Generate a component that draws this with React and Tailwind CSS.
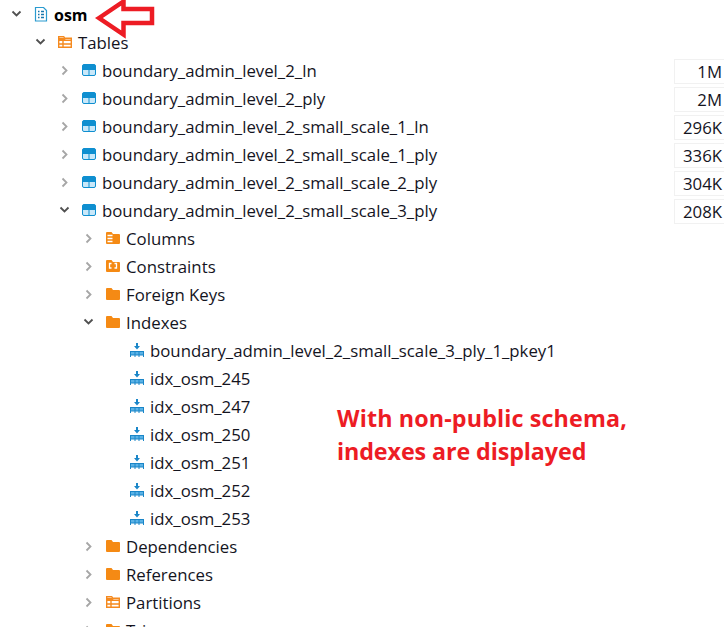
import React from "react";

const pad = ["pl-[8px]", "pl-[32px]", "pl-[56px]", "pl-[80px]", "pl-[104px]"];

const Chevron = ({ open }) => (
  <svg width="16" height="16" viewBox="0 0 16 16" fill="none" className="shrink-0">
    {open ? (
      <path d="M4.500 4.500l4 4 4-4" stroke="#505050" strokeWidth="1.800" />
    ) : (
      <path d="M6.500 3.500l4 4-4 4" stroke="#a6a6a6" strokeWidth="1.800" />
    )}
  </svg>
);

const DbIcon = () => (
  <svg width="16" height="16" viewBox="0 0 16 16" fill="none">
    <path d="M2.500.5h8l3 3v10.500h-11z" stroke="#2a9bd0" strokeWidth="1.200" fill="#fff" />
    <path d="M5 4.500h1.500M8 4.500h3M5 7.500h1.500M8 7.500h3M5 10.500h1.500M8 10.500h3" stroke="#1877ad" strokeWidth="1.500" />
  </svg>
);

const FolderTable = () => (
  <svg width="16" height="16" viewBox="0 0 16 16" fill="none">
    <path d="M1.700 12.300V1.700h5l1 1.500h6.600v9.100z" fill="#fff" stroke="#f58a1f" strokeWidth="1.400" />
    <path d="M2 3h5.500l1 1.500H14V6H2z" fill="#f58a1f" />
    <path d="M6 6v6M2 9h12" stroke="#f58a1f" strokeWidth="1.400" />
  </svg>
);

const TableIcon = () => (
  <svg width="16" height="16" viewBox="0 0 16 16" fill="none">
    <rect x="1.500" y="1.500" width="13" height="11" rx="1.500" fill="#c9e8f9" stroke="#0f8fd0" />
    <path d="M1.500 3a1.500 1.500 0 011.500-1.500h10A1.500 1.500 0 0114.500 3v3h-13z" fill="#0f8fd0" />
    <path d="M8 6v6.500M1.500 6.500h13" stroke="#0f8fd0" />
  </svg>
);

const folderPath = "M1 2a1 1 0 011-1h4.500l1.500 2h6a1 1 0 011 1v8a1 1 0 01-1 1H2a1 1 0 01-1-1z";

const Folder = () => (
  <svg width="16" height="16" viewBox="0 0 16 16">
    <path d={folderPath} fill="#f58a14" />
  </svg>
);

const ColumnsFolder = () => (
  <svg width="16" height="16" viewBox="0 0 16 16">
    <path d={folderPath} fill="#f58a14" />
    <path d="M2.500 4.500h5M2.500 7.500h5M2.500 10.500h5" stroke="#fff" strokeWidth="1.500" />
  </svg>
);

const ConstraintFolder = () => (
  <svg width="16" height="16" viewBox="0 0 16 16" fill="none">
    <path d={folderPath} fill="#f58a14" />
    <path d="M6.500 4.500H4.500v4.500h2M9.500 4.500h2v4.500h-2" stroke="#fff" strokeWidth="1.300" />
  </svg>
);

const IndexIcon = () => (
  <svg width="16" height="16" viewBox="0 0 16 16" fill="none">
    <path d="M8 0v3" stroke="#1a86c8" strokeWidth="2" />
    <path d="M5 3h6L8 6.500z" fill="#1a86c8" />
    <rect x="1.500" y="8.500" width="13" height="3.500" fill="#5ab2e6" stroke="#1a86c8" />
    <path d="M1.500 12v2M6 8v6M10 8v6M14.500 12v2" stroke="#1a86c8" />
  </svg>
);

const Row = ({ depth, open, leaf, icon, label, bold, count }) => (
  <div className={`flex h-7 items-center ${pad[depth]}`}>
    <div className="w-4 shrink-0">{!leaf && <Chevron open={open} />}</div>
    <div className="ml-[9px] w-4 shrink-0 flex items-center">{icon}</div>
    <span className={`ml-[5px] whitespace-nowrap ${bold ? "text-[16px] font-bold text-black" : ""}`}>{label}</span>
    {count && (
      <div className="ml-auto w-[50px] h-[25px] shrink-0 border border-r-0 border-[#f1f1f1] pr-[2px] text-right leading-[24px]">
        {count}
      </div>
    )}
  </div>
);

const tables = [
  ["boundary_admin_level_2_ln", "1M"],
  ["boundary_admin_level_2_ply", "2M"],
  ["boundary_admin_level_2_small_scale_1_ln", "296K"],
  ["boundary_admin_level_2_small_scale_1_ply", "336K"],
  ["boundary_admin_level_2_small_scale_2_ply", "304K"],
];

const indexes = [
  "boundary_admin_level_2_small_scale_3_ply_1_pkey1",
  "idx_osm_245",
  "idx_osm_247",
  "idx_osm_250",
  "idx_osm_251",
  "idx_osm_252",
  "idx_osm_253",
];

export default function App() {
  return (
    <div className="relative h-[627px] w-[724px] overflow-hidden bg-white pt-[1px] font-['Open_Sans',sans-serif] text-[16.800px] text-[#14141e]">
      <Row depth={0} open icon={<DbIcon />} label="osm" bold />
      <Row depth={1} open icon={<FolderTable />} label="Tables" />
      {tables.map(([name, count]) => (
        <Row key={name} depth={2} icon={<TableIcon />} label={name} count={count} />
      ))}
      <Row depth={2} open icon={<TableIcon />} label="boundary_admin_level_2_small_scale_3_ply" count="208K" />
      <Row depth={3} icon={<ColumnsFolder />} label="Columns" />
      <Row depth={3} icon={<ConstraintFolder />} label="Constraints" />
      <Row depth={3} icon={<Folder />} label="Foreign Keys" />
      <Row depth={3} open icon={<Folder />} label="Indexes" />
      {indexes.map((name) => (
        <Row key={name} depth={4} leaf icon={<IndexIcon />} label={name} />
      ))}
      <Row depth={3} icon={<Folder />} label="Dependencies" />
      <Row depth={3} icon={<Folder />} label="References" />
      <Row depth={3} icon={<FolderTable />} label="Partitions" />
      <Row depth={3} icon={<Folder />} label="Triggers" />

      {/* annotation drawn on top of the tree */}
      <svg width="70" height="40" viewBox="0 0 70 40" fill="none" className="absolute left-[90px] top-0">
        <path d="M9 18L33.500 1.500V9H62v14H33.500v11.500z" stroke="#ed1c24" strokeWidth="4.500" />
      </svg>
      <div className="absolute left-[337px] top-[402px] text-[23.300px] font-bold leading-[33px] text-[#ed1c24] whitespace-nowrap">
        <div className="tracking-[0.13px]">With non-public schema,</div>
        <div className="tracking-[-0.1px]">indexes are displayed</div>
      </div>
    </div>
  );
}
